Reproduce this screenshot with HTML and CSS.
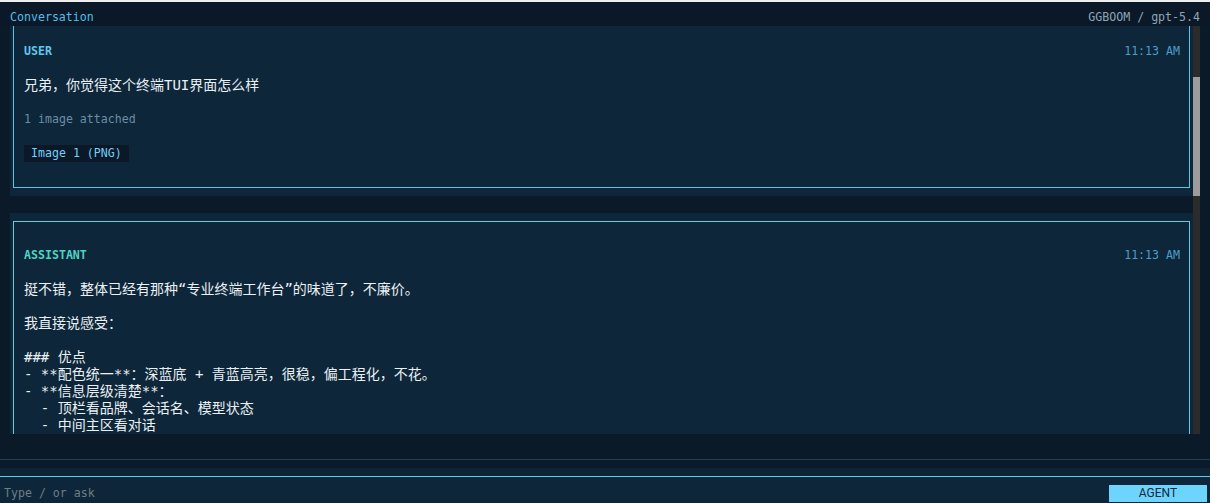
FILE: index.html
```html
<!DOCTYPE html>
<html lang="zh-CN">
<head>
<meta charset="utf-8">
<title>Conversation</title>
<link rel="stylesheet" href="styles.css">
</head>
<body>
<div class="topstrip"></div>
<header class="titlebar">
  <span class="title">Conversation</span>
  <span class="meta">GGBOOM / gpt-5.4</span>
</header>
<main class="viewport">
  <div class="messages">
    <section class="msg msg-first">
      <div class="card card-user">
        <div class="card-head"><span class="role role-user">USER</span><span class="time">11:13 AM</span></div>
        <div class="body">兄弟，你觉得这个终端TUI界面怎么样</div>
        <div class="attach">1 image attached</div>
        <div class="chips"><span class="chip">Image 1 (PNG)</span></div>
      </div>
    </section>
    <section class="msg">
      <div class="card card-assistant">
        <div class="card-head"><span class="role role-assistant">ASSISTANT</span><span class="time">11:13 AM</span></div>
        <div class="body">挺不错，整体已经有那种“专业终端工作台”的味道了，不廉价。

我直接说感受：

### 优点
- **配色统一**：深蓝底 + 青蓝高亮，很稳，偏工程化，不花。
- **信息层级清楚**：
  - 顶栏看品牌、会话名、模型状态
  - 中间主区看对话
  - 底部输入区看操作
- **边框和留白克制**：卡片分隔明确，但不抢内容。

### 可以再打磨的地方
- 时间戳颜色可以再暗一点
- 输入框可以加一个光标提示</div>
      </div>
    </section>
  </div>
  <div class="scrollbar"><div class="thumb"></div></div>
</main>
<div class="status"></div>
<div class="band-dark"></div>
<div class="band-light"></div>
<footer class="inputbar">
  <span class="placeholder">Type / or ask</span>
  <span class="mode">AGENT</span>
</footer>
</body>
</html>
```
FILE: styles.css
```css
html, body {
  margin: 0;
  padding: 0;
}
body {
  width: 1210px;
  height: 503px;
  overflow: hidden;
  background: #0a1a29;
  font-family: "DejaVu Sans Mono", "Noto Sans CJK SC", monospace;
  font-size: 11.6px;
  line-height: 17px;
  color: #e6edf2;
}
.topstrip {
  height: 2px;
  background: #eceeef;
}
.titlebar {
  box-sizing: border-box;
  height: 24px;
  padding: 7px 10px 0 10px;
  display: flex;
  justify-content: space-between;
  background: #0a1827;
}
.title {
  color: #4fbfee;
}
.meta {
  color: #8ea6b6;
}
.viewport {
  display: flex;
  height: 408px;
  margin: 0 10px;
  background: #0a1a29;
}
.messages {
  flex: 1;
  overflow: hidden;
  display: flex;
  flex-direction: column;
  gap: 17px;
}
.msg {
  flex: none;
  background: #0d2639;
  padding: 8px 3px;
}
.msg-first {
  margin-top: -17px;
}
.card {
  border: 1px solid #5cc4e4;
  padding: 25px 9px 25px 10px;
  display: flex;
  flex-direction: column;
  gap: 17px;
}
.card-assistant {
  border-color: #62cdd8;
}
.card-head {
  display: flex;
  justify-content: space-between;
}
.role {
  font-weight: bold;
}
.role-user {
  color: #62c6f0;
}
.role-assistant {
  color: #4fd3c4;
}
.time {
  color: #4f9cc9;
}
.body {
  font-size: 14px;
  white-space: pre-wrap;
  color: #eaf0f4;
}
.attach {
  color: #6a8ea5;
}
.chips {
  display: flex;
}
.chip {
  background: #0a1828;
  color: #74cff8;
  padding: 0 7px;
}
.scrollbar {
  width: 7px;
  background: #2b2b2b;
}
.thumb {
  margin-top: 51px;
  height: 119px;
  background: #9c9c9c;
}
.status {
  height: 25px;
  border-bottom: 1px solid #1f4156;
  background: #0a1a29;
}
.band-dark {
  height: 8px;
  background: #0a1a2a;
}
.band-light {
  height: 8px;
  background: #0c2436;
}
.inputbar {
  box-sizing: border-box;
  height: 27px;
  border-top: 1px solid #62c9ef;
  background: #0d2639;
  display: flex;
  justify-content: space-between;
  align-items: flex-start;
  padding: 8px 3px 0 4px;
}
.placeholder {
  color: #6e7e87;
}
.mode {
  width: 98px;
  height: 17px;
  background: #6dd5fd;
  color: #0b2a3e;
  font-family: Roboto, "Liberation Sans", sans-serif;
  font-size: 12px;
  text-align: center;
}
```
